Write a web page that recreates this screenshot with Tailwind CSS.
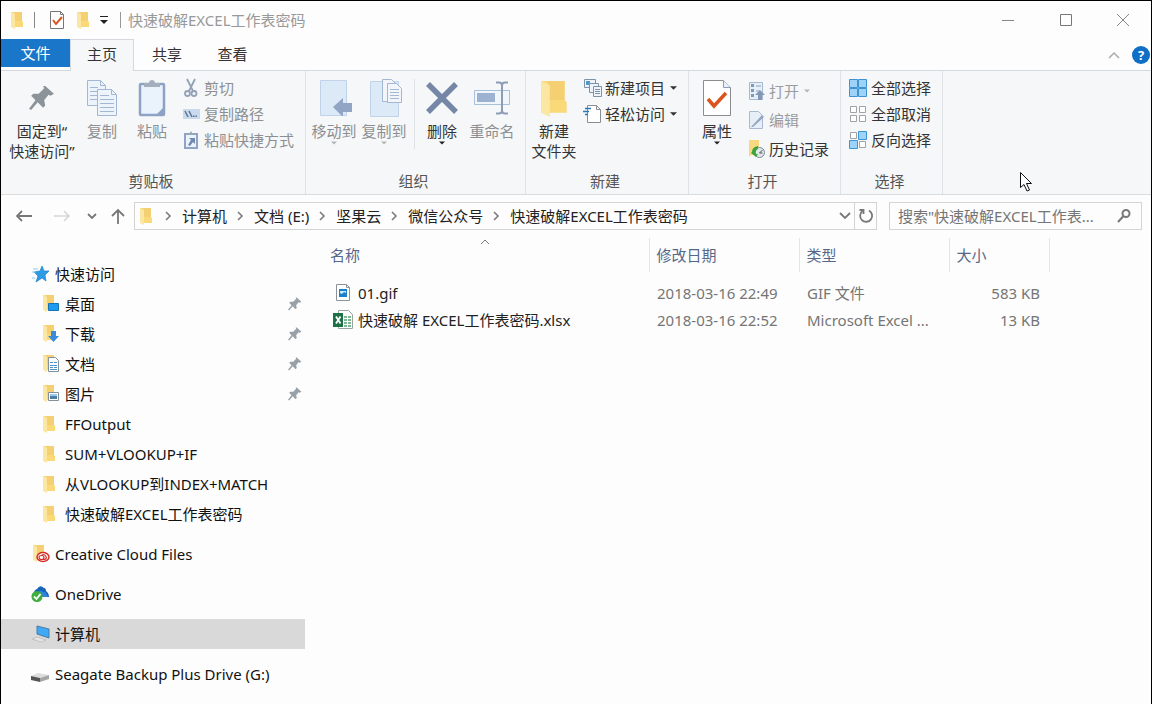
<!DOCTYPE html>
<html lang="zh-CN">
<head>
  <meta charset="UTF-8" />
  <meta name="viewport" content="width=device-width, initial-scale=1.0"/>
  <title>快速破解EXCEL工作表密码</title>
  <script src="https://cdn.jsdelivr.net/npm/@tailwindcss/browser@4"></script>
</head>
<body class="min-h-screen flex flex-col bg-[#fdfdfd] border-t border-x border-black font-['Noto_Sans','Noto_Sans_CJK_SC',sans-serif] text-[15px] leading-5 text-[#111] whitespace-nowrap overflow-hidden">

  <!-- shared icons -->
  <svg class="hidden">
    <symbol id="folder" viewBox="0 0 14 18">
      <path d="M1 1h11v9l1 1v5H1z" fill="#f9d978"/>
      <path d="M4 1h8v9H5z" fill="#f5d073"/>
      <path d="M1 1l4 2v15l-4-2z" fill="#fbe6a4"/>
    </symbol>
    <symbol id="pin" viewBox="0 0 24 24">
      <path d="M15 1l8 7-3 2-2-1-4 5 1 5-2 2-5-5-6 7-2-1 6-8-4-4 2-2 5 0 5-5-1-2z" fill="currentColor"/>
    </symbol>
    <symbol id="crumb" viewBox="0 0 8 10">
      <path d="M2 1l4 4-4 4" fill="none" stroke="#777" stroke-width="1.5"/>
    </symbol>
    <symbol id="down" viewBox="0 0 8 4">
      <path d="M0 0h8L4 4z" fill="currentColor"/>
    </symbol>
    <symbol id="check" viewBox="0 0 28 36">
      <path d="M.5.5h20l7 7v28H.5z" fill="#fff" stroke="#8b8d90"/>
      <path d="M20.500.5v7h7" fill="#e4f0fb" stroke="#8b9db5"/>
      <path d="M5 19l6 7 12-13" fill="none" stroke="#d9541e" stroke-width="3.500"/>
    </symbol>
  </svg>

  <!-- title bar -->
  <header class="flex items-center h-[38px] pl-2 shrink-0">
    <svg class="w-4 h-[18px]"><use href="#folder"/></svg>
    <span class="w-px h-4 bg-[#888] ml-[9px]"></span>
    <button class="ml-[15px]" aria-label="属性"><svg class="w-[14px] h-[18px]" viewBox="0 0 14 18"><path d="M.5.5h10l3 3v14H.5z" fill="#fff" stroke="#777"/><path d="M10.500.5v3h3" fill="none" stroke="#777"/><path d="M3 9l3 4 6-7" fill="none" stroke="#d9541e" stroke-width="2"/></svg></button>
    <button class="ml-[11px]" aria-label="新建文件夹"><svg class="w-4 h-[18px]"><use href="#folder"/></svg></button>
    <button class="ml-[9px]" aria-label="自定义快速访问工具栏">
      <svg class="w-2 h-2" viewBox="0 0 8 8"><path d="M0 0h8v1H0zM0 4h8L4 8z" fill="#222"/></svg>
    </button>
    <span class="w-px h-4 bg-[#999] ml-3"></span>
    <h1 class="ml-[7px] text-[#999]">快速破解EXCEL工作表密码</h1>
    <div class="ml-auto flex h-full">
      <button class="w-[58px] flex items-center justify-center" aria-label="最小化"><svg class="w-3 h-3" viewBox="0 0 12 12"><path d="M0 6.500h12" stroke="#888"/></svg></button>
      <button class="w-[58px] flex items-center justify-center" aria-label="最大化"><svg class="w-3 h-3" viewBox="0 0 12 12"><path d="M.5.5h11v11H.5z" fill="none" stroke="#777"/></svg></button>
      <button class="w-14 flex items-center justify-center" aria-label="关闭"><svg class="w-[14px] h-[14px]" viewBox="0 0 14 14"><path d="M1 1l12 12M13 1L1 13" stroke="#888"/></svg></button>
    </div>
  </header>

  <!-- tabs -->
  <nav class="flex h-8 shrink-0 border-b border-[#d5d8dc] text-[#333]">
    <button class="w-[69px] h-7 bg-[#1976c8] text-white">文件</button>
    <button class="w-16 h-8 pb-1 bg-[#f5f7f8] border-t border-x border-[#d5d8dc]">主页</button>
    <button class="w-[66px] pb-px">共享</button>
    <button class="w-[65px] pb-px">查看</button>
    <div class="ml-auto flex items-center gap-3 pr-px">
      <button aria-label="折叠功能区"><svg class="w-3 h-2" viewBox="0 0 12 8"><path d="M1 7l5-5 5 5" fill="none" stroke="#aaa" stroke-width="1.500"/></svg></button>
      <button class="w-[18px] h-[18px] rounded-full bg-[#0f6fc6] text-white text-[13px] leading-[18px] font-bold" aria-label="帮助">?</button>
    </div>
  </nav>

  <!-- ribbon -->
  <section class="flex h-[124px] shrink-0 bg-[#f5f7f8] border-b border-[#d9dbdd] text-[#333]">
    <div class="w-[305px] flex flex-col border-r border-[#dfe2e5]">
      <div class="flex flex-1 pt-1 pl-[6px]">
        <button class="w-[70px] flex flex-col items-center">
          <span class="h-[46px] flex items-center"><svg class="w-[26px] h-[26px] text-[#8b939b]"><use href="#pin"/></svg></span>
          <span>固定到“<br>快速访问”</span>
        </button>
        <button class="w-[50px] flex flex-col items-center text-[#8d8f92]">
          <span class="h-[46px] flex items-center">
            <svg class="w-[30px] h-9" viewBox="0 0 30 36" fill="#edf3fa" stroke="#a3b6d2">
              <path d="M.5.5h13l5 5v20H.5z"/><path d="M13.500.5v5h5" fill="none"/>
              <path d="M3 7.500h8M3 11.500h8M3 15.500h8M3 19.500h8" />
              <path d="M10.500 9.500h14l5 5v21h-19z"/><path d="M24.500 9.500v5h5" fill="none"/>
              <path d="M13 15.500h9M13 19.500h14M13 23.500h14M13 27.500h14M13 31.500h14"/>
            </svg>
          </span>
          <span>复制</span>
        </button>
        <button class="w-[50px] flex flex-col items-center text-[#8d8f92]">
          <span class="h-[46px] flex items-center">
            <svg class="w-7 h-[38px]" viewBox="0 0 28 38">
              <rect x="2" y="5" width="24" height="31" rx="1" fill="#eaf2fb" stroke="#8da2c4" stroke-width="2.500"/>
              <path d="M19 35l6-6v6z" fill="#8da2c4"/>
              <path d="M6 8V4h5c0-4 6-4 6 0h5v4z" fill="#a5aebc"/>
            </svg>
          </span>
          <span>粘贴</span>
        </button>
        <div class="ml-1 flex flex-col text-[#8d8f92]">
          <button class="h-[26px] flex items-center gap-[3px]">
            <svg class="w-5 h-5" viewBox="0 0 20 20" fill="none" stroke="#93a2b8" stroke-width="1.800"><path d="M6 1l6 12M14 1L8 13"/><circle cx="6.500" cy="15.500" r="2.500"/><circle cx="13" cy="15.500" r="2.500"/></svg>剪切
          </button>
          <button class="h-[26px] flex items-center gap-[3px]">
            <svg class="w-5 h-5" viewBox="0 0 20 20"><path d="M2 5h17v10H2z" fill="#c9d9ee"/><path d="M4 7l3 6M8 7l3 6" stroke="#5f7595" stroke-width="1.500"/><path d="M12 11.500h1.500v1.500H12zM14.500 11.500H16v1.500h-1.500z" fill="#5f7595"/></svg>复制路径
          </button>
          <button class="h-[26px] flex items-center gap-[3px]">
            <svg class="w-5 h-5" viewBox="0 0 20 20"><path d="M4 4h12v14H4z" fill="#eaf2fb" stroke="#8fa4c4" stroke-width="2"/><path d="M7 5V3h2c0-2 2-2 2 0h2v2z" fill="#9aa6b8"/><path d="M8 8h6v6l-2-2-3 4-2-1 3-5z" fill="#7189ae"/></svg>粘贴快捷方式
          </button>
        </div>
      </div>
      <span class="h-6 text-center leading-[22px] text-[#555] pr-1">剪贴板</span>
    </div>

    <div class="w-[220px] flex flex-col border-r border-[#dfe2e5]">
      <div class="flex flex-1 pt-1 pl-[3px]">
        <button class="w-[50px] flex flex-col items-center text-[#8d8f92]">
          <span class="h-[46px] flex items-center">
            <svg class="w-9 h-9" viewBox="0 0 36 36"><path d="M4.500.5h26v35h-26z" fill="#dce9f6" stroke="#c0d3ea"/><path d="M17 27l10-9v5h9v9h-9v5z" fill="#93a5c4"/></svg>
          </span>
          <span>移动到</span>
          <svg class="w-[6px] h-1 text-[#b5b5b5]"><use href="#down"/></svg>
        </button>
        <button class="w-[50px] flex flex-col items-center text-[#8d8f92]">
          <span class="h-[46px] flex items-center">
            <svg class="w-9 h-[38px]" viewBox="0 0 36 38"><path d="M4.500 2.500h28v35h-28z" fill="#dce9f6" stroke="#c0d3ea"/><g fill="#f2f6fb" stroke="#a3b6d2"><path d="M16.500.5h9l4 4v18h-13z"/><path d="M21.500 4.500h9l5 5v14h-14z"/><path d="M24 10.500h9M24 13.500h9M24 16.500h9M24 19.500h9"/></g></svg>
          </span>
          <span>复制到</span>
          <svg class="w-[6px] h-1 text-[#b5b5b5]"><use href="#down"/></svg>
        </button>
        <span class="w-px h-[70px] mt-1 mr-[2px] ml-[5px] bg-[#dfe2e5]"></span>
        <button class="w-[50px] flex flex-col items-center">
          <span class="h-[46px] flex items-center">
            <svg class="w-8 h-8" viewBox="0 0 32 32"><path d="M2 2l28 28M30 2L2 30" stroke="#7586a6" stroke-width="5.500"/></svg>
          </span>
          <span>删除</span>
          <svg class="w-[6px] h-1 text-[#222]"><use href="#down"/></svg>
        </button>
        <button class="w-[50px] flex flex-col items-center text-[#8d8f92]">
          <span class="h-[46px] flex items-center">
            <svg class="w-9 h-[34px]" viewBox="0 0 36 34"><path d="M.5 9.500h35v14H.5z" fill="#f1f6fb" stroke="#a9c0dd"/><path d="M3 12h18v9H3z" fill="#9db1d0"/><path d="M22 1.500h3q3 0 3 3v25q0 3-3 3h-3M34 1.500h-3q-3 0-3 3M34 32.500h-3q-3 0-3-3" fill="none" stroke="#8d9db5" stroke-width="2"/></svg>
          </span>
          <span>重命名</span>
        </button>
      </div>
      <span class="h-6 text-center leading-[22px] text-[#555] pr-1">组织</span>
    </div>

    <div class="w-[163px] flex flex-col border-r border-[#dfe2e5]">
      <div class="flex flex-1 pt-1 pl-[3px]">
        <button class="w-[50px] flex flex-col items-center">
          <span class="h-[46px] flex items-center"><svg class="w-[30px] h-[38px]"><use href="#folder"/></svg></span>
          <span>新建<br>文件夹</span>
        </button>
        <div class="ml-1 flex flex-col">
          <button class="h-[26px] flex items-center gap-[2px]">
            <svg class="w-5 h-5" viewBox="0 0 20 20" fill="#eef4fa" stroke="#7c93a8"><path d="M1.500 1.500h11v8h-11z"/><path d="M3 3h4v4H3z" fill="#4d9ac4" stroke="none"/><path d="M6.500 5.500h9v9h-9z"/><path d="M10.500 8.500h8v10h-8z"/><path d="M12 11.500h5M12 13.500h5M12 15.500h5"/></svg>新建项目
            <svg class="w-[7px] h-1 ml-[3px]"><use href="#down"/></svg>
          </button>
          <button class="h-[26px] flex items-center gap-[2px]">
            <svg class="w-5 h-5" viewBox="0 0 20 20"><path d="M4.500 1.500h9l4 4v13h-13z" fill="#fff" stroke="#8b8d90"/><path d="M13.500 1.500v4h4" fill="none" stroke="#8b8d90"/><path d="M2 4.500h6M0 7.500h6M2 10.500h3" stroke="#2e78b5" stroke-width="1.500"/></svg>轻松访问
            <svg class="w-[7px] h-1 ml-[3px]"><use href="#down"/></svg>
          </button>
        </div>
      </div>
      <span class="h-6 text-center leading-[22px] text-[#555] pr-1">新建</span>
    </div>

    <div class="w-[152px] flex flex-col border-r border-[#dfe2e5]">
      <div class="flex flex-1 pt-1 pl-[3px]">
        <button class="w-[50px] flex flex-col items-center">
          <span class="h-[46px] flex items-center"><svg class="w-7 h-9"><use href="#check"/></svg></span>
          <span>属性</span>
          <svg class="w-[6px] h-1 text-[#222]"><use href="#down"/></svg>
        </button>
        <div class="ml-[5px] pt-px flex flex-col">
          <button class="h-[29px] flex items-center gap-[2px] text-[#9a9c9f]">
            <svg class="w-5 h-5" viewBox="0 0 20 20"><path d="M2.500 1.500h13v17h-13z" fill="#e6eef7" stroke="#a9bad0"/><path d="M4 3h3v3H4zM4 8h3v3H4zM4 13h3v3H4z" fill="#8297b5"/><path d="M9 4h5v2H9zM9 9h4v2H9z" fill="#b8c8dc"/><path d="M13 9l5 5h-3v5h-4v-5H8z" fill="#8397b8"/></svg>打开
            <svg class="w-[6px] h-1 ml-[3px] text-[#b5b5b5]"><use href="#down"/></svg>
          </button>
          <button class="h-[29px] flex items-center gap-[2px] text-[#9a9c9f]">
            <svg class="w-5 h-5" viewBox="0 0 20 20"><path d="M2.500 1.500h9l4 4v13h-13z" fill="#e6eef7" stroke="#a9bad0"/><path d="M4 17L15 5l2 2L6 17z" fill="#93a5bf"/></svg>编辑
          </button>
          <button class="h-[29px] flex items-center gap-[2px]">
            <svg class="w-5 h-5" viewBox="0 0 20 20"><path d="M2 1h10v15H4l-2 2z" fill="#f8d980"/><circle cx="12.500" cy="13.500" r="5" fill="#dfe7ea" stroke="#7d8b91"/><path d="M12.500 14l3-3M12.500 14h3" fill="none" stroke="#555"/><path d="M5 13q0-5 6-6v3q-3 1-2 5l2 0-2 3-5-4z" fill="#3ba53c"/></svg>历史记录
          </button>
        </div>
      </div>
      <span class="h-6 text-center leading-[22px] text-[#555] pr-1">打开</span>
    </div>

    <div class="w-[102px] flex flex-col border-r border-[#dfe2e5]">
      <div class="flex flex-col flex-1 pt-1 pl-[7px]">
        <button class="h-[26px] flex items-center gap-[3px]">
          <svg class="w-5 h-5" viewBox="0 0 20 20" fill="#9fd2f7" stroke="#3c94d2"><path d="M1.500 1.500h8v8h-8zM10.500 1.500h8v8h-8zM1.500 10.500h8v8h-8zM10.500 10.500h8v8h-8z"/></svg>全部选择
        </button>
        <button class="h-[26px] flex items-center gap-[3px]">
          <svg class="w-5 h-5" viewBox="0 0 20 20" fill="#fff" stroke="#a0a2a5"><path d="M2.500 2.500h6v6h-6zM11.500 2.500h6v6h-6zM2.500 11.500h6v6h-6zM11.500 11.500h6v6h-6z"/></svg>全部取消
        </button>
        <button class="h-[26px] flex items-center gap-[3px]">
          <svg class="w-5 h-5" viewBox="0 0 20 20"><path d="M2.500 2.500h6v6h-6zM11.500 11.500h6v6h-6z" fill="#fff" stroke="#a0a2a5"/><path d="M10.500 1.500h8v8h-8zM1.500 10.500h8v8h-8z" fill="#9fd2f7" stroke="#3c94d2"/></svg>反向选择
        </button>
      </div>
      <span class="h-6 text-center leading-[22px] text-[#555] pr-1">选择</span>
    </div>
  </section>

  <!-- address bar -->
  <div class="flex items-center h-10 shrink-0 pt-px pl-[14px] pr-[9px]">
    <button aria-label="后退"><svg class="w-[18px] h-4" viewBox="0 0 18 16"><path d="M17 8H2M7 3L2 8l5 5" fill="none" stroke="#777" stroke-width="1.800"/></svg></button>
    <button class="ml-5" aria-label="前进"><svg class="w-[18px] h-4" viewBox="0 0 18 16"><path d="M1 8h15M11 3l5 5-5 5" fill="none" stroke="#d5d5d5" stroke-width="1.500"/></svg></button>
    <button class="ml-4" aria-label="最近浏览的位置"><svg class="w-[10px] h-2" viewBox="0 0 10 8"><path d="M1 2l4 4 4-4" fill="none" stroke="#777" stroke-width="1.800"/></svg></button>
    <button class="ml-[13px]" aria-label="上移"><svg class="w-4 h-[18px]" viewBox="0 0 16 18"><path d="M8 17V3M2 9l6-6 6 6" fill="none" stroke="#777" stroke-width="1.800"/></svg></button>
    <div class="ml-2 flex flex-1 items-center h-7 border border-[#d4d4d4] text-[#222]">
      <svg class="w-4 h-[18px] ml-[3px]"><use href="#folder"/></svg>
      <svg class="w-2 h-[10px] ml-[10px] mr-[10px]"><use href="#crumb"/></svg>
      <a href="#">计算机</a>
      <svg class="w-2 h-[10px] ml-[9px] mr-[10px]"><use href="#crumb"/></svg>
      <a href="#">文档 (E:)</a>
      <svg class="w-2 h-[10px] ml-[9px] mr-[10px]"><use href="#crumb"/></svg>
      <a href="#">坚果云</a>
      <svg class="w-2 h-[10px] ml-[9px] mr-[10px]"><use href="#crumb"/></svg>
      <a href="#">微信公众号</a>
      <svg class="w-2 h-[10px] ml-[9px] mr-[10px]"><use href="#crumb"/></svg>
      <a href="#">快速破解EXCEL工作表密码</a>
      <button class="ml-auto mr-[3px]" aria-label="以前的位置"><svg class="w-3 h-2" viewBox="0 0 12 8"><path d="M1 1l5 5 5-5" fill="none" stroke="#777" stroke-width="1.800"/></svg></button>
      <button class="w-[22px] h-full flex items-center justify-center border-l border-[#d4d4d4]" aria-label="刷新">
        <svg class="w-4 h-4" viewBox="0 0 16 16" fill="none" stroke="#777" stroke-width="1.800"><path d="M11 2.500A6 6 0 1 1 4.500 3"/><path d="M1.500 2h4v4"/></svg>
      </button>
    </div>
    <div class="ml-3 flex items-center w-[253px] h-7 border border-[#d4d4d4] pl-2 pr-[9px]">
      <input class="flex-1 min-w-0 outline-none placeholder:text-[#757575]" type="text" aria-label="搜索" placeholder='搜索"快速破解EXCEL工作表...'>
      <button aria-label="开始搜索"><svg class="w-4 h-4" viewBox="0 0 16 16" fill="none" stroke="#777" stroke-width="2"><circle cx="10" cy="5.500" r="3.500"/><path d="M7.500 8L2 14"/></svg></button>
    </div>
  </div>

  <div class="flex flex-1">
    <!-- navigation pane -->
    <aside class="w-[304px] shrink-0 pt-6 flex flex-col gap-[10px]">
      <div>
        <a href="#" class="flex items-center h-[30px] pl-[30px] gap-1">
          <svg class="w-5 h-5" viewBox="0 0 20 20"><path d="M11 2l2 5 5 0-4 4 1 6-4-3-6 4 2-6-4-4 6-1z" fill="#2e9be6" stroke="#1c7fc4" stroke-width=".7"/><path d="M2 5h5M1 8h4M1 14h3" stroke="#8cc8f0"/></svg>快速访问
        </a>
        <a href="#" class="flex items-center h-[30px] pl-[41px] pr-[3px] gap-[3px]">
          <svg class="w-5 h-5" viewBox="0 0 20 20"><use href="#folder" width="14" height="18"/><path d="M6.500 9.500h10v7h-10z" fill="#1d9bf0" stroke="#1672b5"/></svg>桌面
          <svg class="w-[14px] h-[14px] ml-auto text-[#98a0a8]"><use href="#pin"/></svg>
        </a>
        <a href="#" class="flex items-center h-[30px] pl-[41px] pr-[3px] gap-[3px]">
          <svg class="w-5 h-5" viewBox="0 0 20 20"><use href="#folder" width="14" height="18"/><path d="M9 7h5v5h3l-5.500 6L6 12h3z" fill="#3a8bdc"/></svg>下载
          <svg class="w-[14px] h-[14px] ml-auto text-[#98a0a8]"><use href="#pin"/></svg>
        </a>
        <a href="#" class="flex items-center h-[30px] pl-[41px] pr-[3px] gap-[3px]">
          <svg class="w-5 h-5" viewBox="0 0 20 20"><use href="#folder" width="14" height="18"/><path d="M6.500 3.500h7l3 3v11h-10z" fill="#fff" stroke="#83909b"/><path d="M8 8.500h3M12 8.500h3M8 11.500h7M8 13.500h3M12 13.500h3M8 15.500h7" stroke="#4a94cc"/></svg>文档
          <svg class="w-[14px] h-[14px] ml-auto text-[#98a0a8]"><use href="#pin"/></svg>
        </a>
        <a href="#" class="flex items-center h-[30px] pl-[41px] pr-[3px] gap-[3px]">
          <svg class="w-5 h-5" viewBox="0 0 20 20"><use href="#folder" width="14" height="18"/><path d="M6.500 8.500h10v8h-10z" fill="#fff" stroke="#83909b"/><path d="M8 10h7v2H8z" fill="#9cc8ea"/><path d="M8 12h7v3H8z" fill="#4e7fa8"/></svg>图片
          <svg class="w-[14px] h-[14px] ml-auto text-[#98a0a8]"><use href="#pin"/></svg>
        </a>
        <a href="#" class="flex items-center h-[30px] pl-10 gap-2"><svg class="w-4 h-[18px]"><use href="#folder"/></svg>FFOutput</a>
        <a href="#" class="flex items-center h-[30px] pl-10 gap-2"><svg class="w-4 h-[18px]"><use href="#folder"/></svg>SUM+VLOOKUP+IF</a>
        <a href="#" class="flex items-center h-[30px] pl-10 gap-2"><svg class="w-4 h-[18px]"><use href="#folder"/></svg>从VLOOKUP到INDEX+MATCH</a>
        <a href="#" class="flex items-center h-[30px] pl-10 gap-2"><svg class="w-4 h-[18px]"><use href="#folder"/></svg>快速破解EXCEL工作表密码</a>
      </div>
      <a href="#" class="flex items-center h-[30px] pl-[30px] gap-1">
        <svg class="w-5 h-5" viewBox="0 0 20 20"><use href="#folder" x="1" width="14" height="18"/><ellipse cx="12" cy="13" rx="6" ry="4.500" fill="#fff" stroke="#d6302b" stroke-width="1.500"/><ellipse cx="10.500" cy="13.500" rx="2.500" ry="2" fill="none" stroke="#d6302b" stroke-width="1.200"/><path d="M10.500 11.500q3-2 4.500 1t-3 3" fill="none" stroke="#d6302b" stroke-width="1.200"/></svg>Creative Cloud Files
      </a>
      <a href="#" class="flex items-center h-[30px] pl-[29px] gap-[5px]">
        <svg class="w-5 h-5" viewBox="0 0 20 20"><path d="M4 9q0-3 3-4 3-5 7-1 2 0 2 3 3 2 3 6H8z" fill="#1565b8"/><path d="M8 9q2-4 5-1 3-1 3 2 2 1 2 3H8z" fill="#2f86d8"/><circle cx="7" cy="12.500" r="5.500" fill="#3fae3e"/><path d="M4 12.500l2.500 2.500 4-5" fill="none" stroke="#fff" stroke-width="1.800"/></svg>OneDrive
      </a>
      <a href="#" class="flex items-center h-[30px] pl-[30px] gap-1 bg-[#d9d9d9]">
        <svg class="w-5 h-5" viewBox="0 0 20 20"><path d="M6 2l12 3v9L6 10z" fill="#3fa9f5" stroke="#4b7ba5"/><path d="M1 15l5-2 9 3-5 2z" fill="#e5e5e5" stroke="#bbb" stroke-width=".8"/></svg>计算机
      </a>
      <a href="#" class="flex items-center h-[30px] pl-[29px] gap-[5px]">
        <svg class="w-5 h-5" viewBox="0 0 20 20"><path d="M1 12l7-3 11 2-9 3z" fill="#dcdcdc"/><path d="M1 12l9 2v4l-9-2z" fill="#555"/><path d="M10 14l9-3v4l-9 3z" fill="#a5a5a5"/></svg>Seagate Backup Plus Drive (G:)
      </a>
    </aside>

    <!-- file list -->
    <main class="flex-1 pl-[17px] pt-[3px]">
      <table class="table-fixed w-[727px]">
        <thead class="text-[#56688a]">
          <tr class="h-[34px]">
            <th class="relative w-[327px] pl-2 text-left font-normal border-r border-[#e5e5e5]">名称
              <svg class="absolute inset-x-0 mx-auto top-px w-[10px] h-[6px]" viewBox="0 0 10 6"><path d="M1 5l4-4 4 4" fill="none" stroke="#777"/></svg>
            </th>
            <th class="w-[150px] pl-[7px] text-left font-normal border-r border-[#e5e5e5]">修改日期</th>
            <th class="w-[150px] pl-[7px] text-left font-normal border-r border-[#e5e5e5]">类型</th>
            <th class="w-[100px] pl-[7px] text-left font-normal border-r border-[#e5e5e5]">大小</th>
          </tr>
        </thead>
        <tbody class="text-[#757575]">
          <tr><td class="h-[7px]" colspan="4"></td></tr>
          <tr class="h-[27px]">
            <td class="pl-[11px] text-[#222]">
              <div class="flex items-center gap-[5px]">
                <svg class="w-5 h-5" viewBox="0 0 20 20"><path d="M3.500 1.500h10l3 3v13h-13z" fill="#fff" stroke="#8b9298"/><path d="M13.500 1.500v3h3" fill="none" stroke="#8b9298"/><path d="M6 6h8v8H6z" fill="#1b7fd0"/><path d="M7 8h6v2l-2-1-2 2-2-1z" fill="#cfe8fa"/></svg>01.gif
              </div>
            </td>
            <td class="pl-2">2018-03-16 22:49</td>
            <td class="pl-2">GIF 文件</td>
            <td class="pr-[9px] text-right">583 KB</td>
          </tr>
          <tr class="h-[27px]">
            <td class="pl-[11px] text-[#222]">
              <div class="flex items-center gap-[5px]">
                <svg class="w-5 h-5" viewBox="0 0 20 20"><path d="M5.500.5h10l4 4v14h-14z" fill="#fff" stroke="#9aa59d"/><path d="M11 6h3v2h-3zM15 6h3v2h-3zM11 9h3v2h-3zM15 9h3v2h-3zM11 12h3v2h-3zM15 12h3v2h-3zM11 15h3v2h-3zM15 15h3v2h-3z" fill="#7fb894"/><path d="M0 3h10v14H0z" fill="#1e7145"/><path d="M3 6.500l4.500 7M7.500 6.500L3 13.500" stroke="#fff" stroke-width="1.800"/></svg>快速破解 EXCEL工作表密码.xlsx
              </div>
            </td>
            <td class="pl-2">2018-03-16 22:52</td>
            <td class="pl-2">Microsoft Excel ...</td>
            <td class="pr-[9px] text-right">13 KB</td>
          </tr>
        </tbody>
      </table>
    </main>
  </div>

  <!-- mouse pointer -->
  <svg class="absolute left-[1020px] top-[172px] w-3 h-5" viewBox="0 0 12 20"><path d="M.5.5v15l3.500-3 3 6.500 2.500-1-3-6.500h5z" fill="#fff" stroke="#111"/></svg>
</body>
</html>
